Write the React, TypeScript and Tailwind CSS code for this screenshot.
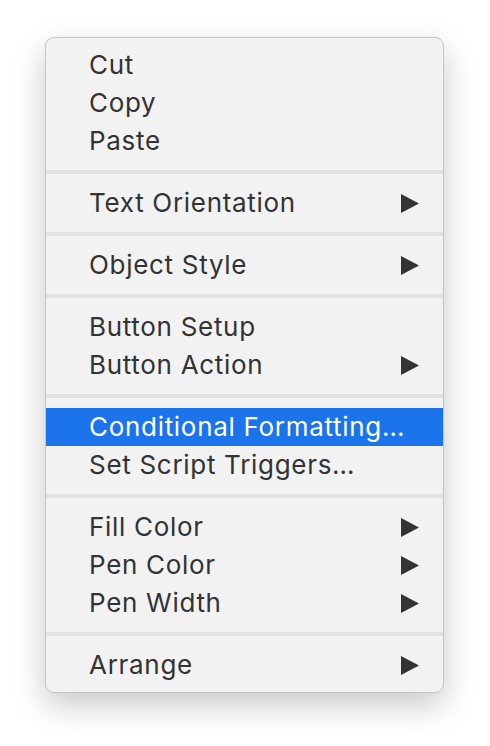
type Item = { label: string; sub?: boolean; active?: boolean };

const groups: Item[][] = [
  [{ label: 'Cut' }, { label: 'Copy' }, { label: 'Paste' }],
  [{ label: 'Text Orientation', sub: true }],
  [{ label: 'Object Style', sub: true }],
  [{ label: 'Button Setup' }, { label: 'Button Action', sub: true }],
  [{ label: 'Conditional Formatting…', active: true }, { label: 'Set Script Triggers…' }],
  [
    { label: 'Fill Color', sub: true },
    { label: 'Pen Color', sub: true },
    { label: 'Pen Width', sub: true },
  ],
  [{ label: 'Arrange', sub: true }],
];

function Arrow() {
  return (
    <svg width="18" height="19" viewBox="0 0 18 19" className="shrink-0">
      <path d="M0 0 L18 9.5 L0 19 Z" fill="#333333" />
    </svg>
  );
}

function App() {
  return (
    <div className="min-h-screen bg-white pt-[37px] pl-[45px]" style={{ fontFamily: 'Inter, "Noto Sans", sans-serif' }}>
      <div className="w-[399px] rounded-[9px] border border-[#c4c4c4] bg-[#f2f2f2] pt-[8px] pb-[8px] shadow-[0_12px_32px_rgba(0,0,0,0.22)]">
        {groups.map((group, gi) => (
          <div key={gi}>
            {gi > 0 && <div className="my-[10px] h-[4px] bg-[#e1e1e1]" />}
            {group.map((item) => (
              <div
                key={item.label}
                className={
                  item.active
                    ? 'flex h-[38px] items-center justify-between bg-[#1b74ec] pl-[43px] pr-[24px] text-white'
                    : 'flex h-[38px] items-center justify-between pl-[43px] pr-[24px] text-[#333333]'
                }
              >
                <span className="text-[26px] leading-none tracking-[0.7px]">{item.label}</span>
                {item.sub && <Arrow />}
              </div>
            ))}
          </div>
        ))}
      </div>
    </div>
  );
}

export default App;
